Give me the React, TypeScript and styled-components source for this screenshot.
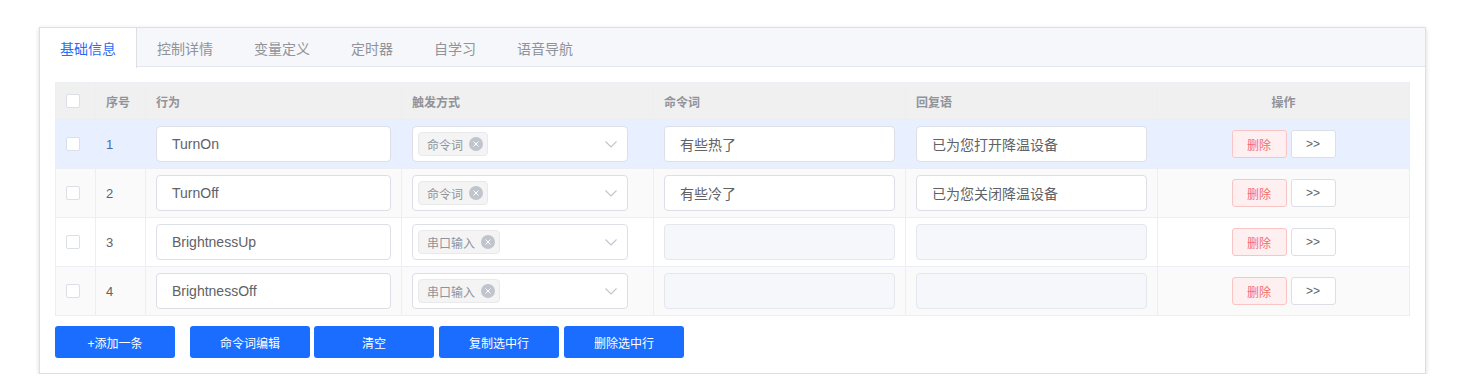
import React from 'react';
import styled, { createGlobalStyle } from 'styled-components';

const GlobalStyle = createGlobalStyle`
  body {
    margin: 0;
    background: #fff;
    font-family: "Liberation Sans", "Noto Sans CJK SC", sans-serif;
  }
  * { box-sizing: border-box; }
`;

const tabs = ['基础信息', '控制详情', '变量定义', '定时器', '自学习', '语音导航'];

const rows = [
  { id: 1, action: 'TurnOn', trigger: '命令词', cmd: '有些热了', reply: '已为您打开降温设备' },
  { id: 2, action: 'TurnOff', trigger: '命令词', cmd: '有些冷了', reply: '已为您关闭降温设备' },
  { id: 3, action: 'BrightnessUp', trigger: '串口输入', cmd: '', reply: '' },
  { id: 4, action: 'BrightnessOff', trigger: '串口输入', cmd: '', reply: '' },
];

const COLS = '40px 50px 256px 252px 252px 252px 1fr';

const App = () => {
  return (
    <>
      <GlobalStyle />
      <Card>
        <TabBar>
          {tabs.map((t, i) => (
            <Tab key={t} $active={i === 0}>{t}</Tab>
          ))}
        </TabBar>
        <Body>
          <Table>
            <HeadRow>
              <Cell><Checkbox /></Cell>
              <HeadCell>序号</HeadCell>
              <HeadCell>行为</HeadCell>
              <HeadCell>触发方式</HeadCell>
              <HeadCell>命令词</HeadCell>
              <HeadCell>回复语</HeadCell>
              <HeadCell $center>操作</HeadCell>
            </HeadRow>
            {rows.map((r, i) => (
              <Row key={r.id} $bg={i === 0 ? '#e8effe' : i % 2 === 1 ? '#fafafa' : '#fff'}>
                <Cell><Checkbox /></Cell>
                <Cell><Index $current={i === 0}>{r.id}</Index></Cell>
                <Cell><TextInput $disabled={false}>{r.action}</TextInput></Cell>
                <Cell>
                  <Select>
                    <Tag>
                      {r.trigger}
                      <TagClose>
                        <svg width="8" height="8" viewBox="0 0 8 8">
                          <path d="M1.5 1.5 L6.5 6.5 M6.5 1.5 L1.5 6.5" stroke="#fff" strokeWidth="1" />
                        </svg>
                      </TagClose>
                    </Tag>
                    <Arrow>
                      <svg width="14" height="14" viewBox="0 0 14 14">
                        <path d="M1.5 4.5 L7 10 L12.5 4.5" fill="none" stroke="#c0c4cc" strokeWidth="1.1" />
                      </svg>
                    </Arrow>
                  </Select>
                </Cell>
                <Cell><TextInput $disabled={!r.cmd}>{r.cmd}</TextInput></Cell>
                <Cell><TextInput $disabled={!r.reply}>{r.reply}</TextInput></Cell>
                <Cell $center>
                  <DangerButton>删除</DangerButton>
                  <PlainButton>&gt;&gt;</PlainButton>
                </Cell>
              </Row>
            ))}
          </Table>
          <Actions>
            <PrimaryButton>+添加一条</PrimaryButton>
            <PrimaryButton $ml={15}>命令词编辑</PrimaryButton>
            <PrimaryButton $ml={4}>清空</PrimaryButton>
            <PrimaryButton $ml={5}>复制选中行</PrimaryButton>
            <PrimaryButton $ml={5}>删除选中行</PrimaryButton>
          </Actions>
        </Body>
      </Card>
    </>
  );
};

const Card = styled.div`
  width: 1387px;
  margin: 27px 0 0 39px;
  border: 1px solid #dcdfe6;
  background: #fff;
  box-shadow: 0 2px 4px rgba(0, 0, 0, 0.12), 0 0 6px rgba(0, 0, 0, 0.04);
`;

const TabBar = styled.div`
  display: flex;
  height: 39px;
  background: #f5f7fa;
  border-bottom: 1px solid #e4e7ed;
`;

const Tab = styled.div<{ $active: boolean }>`
  padding: 0 20px;
  display: flex;
  align-items: center;
  font-size: 14px;
  color: ${(p) => (p.$active ? '#2f6bf5' : '#909399')};
  background: ${(p) => (p.$active ? '#fff' : 'transparent')};
  border-right: 1px solid ${(p) => (p.$active ? '#dcdfe6' : 'transparent')};
  margin-bottom: ${(p) => (p.$active ? '-1px' : '0')};
  height: ${(p) => (p.$active ? '40px' : '39px')};
`;

const Body = styled.div`
  padding: 15px 15px 15px;
`;

const Table = styled.div`
  border: 1px solid #ebeef5;
  border-bottom: none;
`;

const HeadRow = styled.div`
  display: grid;
  grid-template-columns: ${COLS};
  height: 37px;
  background: #f0f0f0;
  border-bottom: 1px solid #ebeef5;
`;

const Row = styled.div<{ $bg: string }>`
  display: grid;
  grid-template-columns: ${COLS};
  height: 49px;
  background: ${(p) => p.$bg};
  border-bottom: 1px solid #ebeef5;
`;

const Cell = styled.div<{ $center?: boolean }>`
  display: flex;
  align-items: center;
  justify-content: ${(p) => (p.$center ? 'center' : 'flex-start')};
  gap: 4px;
  padding: 0 10px;
  border-right: 1px solid #ebeef5;
  min-width: 0;
  &:last-child { border-right: none; }
`;

const HeadCell = styled(Cell)`
  font-size: 12px;
  font-weight: bold;
  color: #909399;
`;

const Checkbox = styled.span`
  display: inline-block;
  width: 14px;
  height: 14px;
  border: 1px solid #dcdfe6;
  border-radius: 2px;
  background: #fff;
`;

const Index = styled.span<{ $current: boolean }>`
  font-size: 13px;
  color: ${(p) => (p.$current ? '#4a6aa8' : '#606266')};
`;

const TextInput = styled.div<{ $disabled: boolean }>`
  width: 100%;
  height: 36px;
  display: flex;
  align-items: center;
  padding: 0 15px;
  font-size: 14px;
  color: #606266;
  background: ${(p) => (p.$disabled ? '#f5f7fa' : '#fff')};
  border: 1px solid ${(p) => (p.$disabled ? '#e4e7ed' : '#dcdfe6')};
  border-radius: 4px;
`;

const Select = styled.div`
  position: relative;
  width: 216px;
  height: 36px;
  display: flex;
  align-items: center;
  padding-left: 5px;
  background: #fff;
  border: 1px solid #dcdfe6;
  border-radius: 4px;
`;

const Tag = styled.span`
  display: inline-flex;
  align-items: center;
  height: 24px;
  padding: 0 4px 0 8px;
  gap: 6px;
  font-size: 12px;
  color: #909399;
  background: #f4f4f5;
  border: 1px solid #e9e9eb;
  border-radius: 4px;
`;

const TagClose = styled.span`
  display: inline-flex;
  align-items: center;
  justify-content: center;
  width: 14px;
  height: 14px;
  border-radius: 50%;
  background: #c0c4cc;
`;

const Arrow = styled.span`
  position: absolute;
  right: 9px;
  top: 50%;
  transform: translateY(-50%);
  display: flex;
`;

const SmallButton = styled.button`
  height: 28px;
  padding: 0 14px;
  font-size: 12px;
  font-family: inherit;
  border-radius: 3px;
  cursor: pointer;
`;

const DangerButton = styled(SmallButton)`
  width: 55px;
  padding: 0;
  color: #f56c6c;
  background: #fef0f0;
  border: 1px solid #fbc4c4;
`;

const PlainButton = styled(SmallButton)`
  width: 45px;
  padding: 0;
  color: #606266;
  background: #fff;
  border: 1px solid #dcdfe6;
`;

const Actions = styled.div`
  display: flex;
  margin-top: 10px;
`;

const PrimaryButton = styled.button<{ $ml?: number }>`
  width: 120px;
  height: 32px;
  margin-left: ${(p) => p.$ml ?? 0}px;
  font-size: 12px;
  font-family: inherit;
  color: #fff;
  background: #1a6dff;
  border: none;
  border-radius: 3px;
  cursor: pointer;
`;

export default App;
